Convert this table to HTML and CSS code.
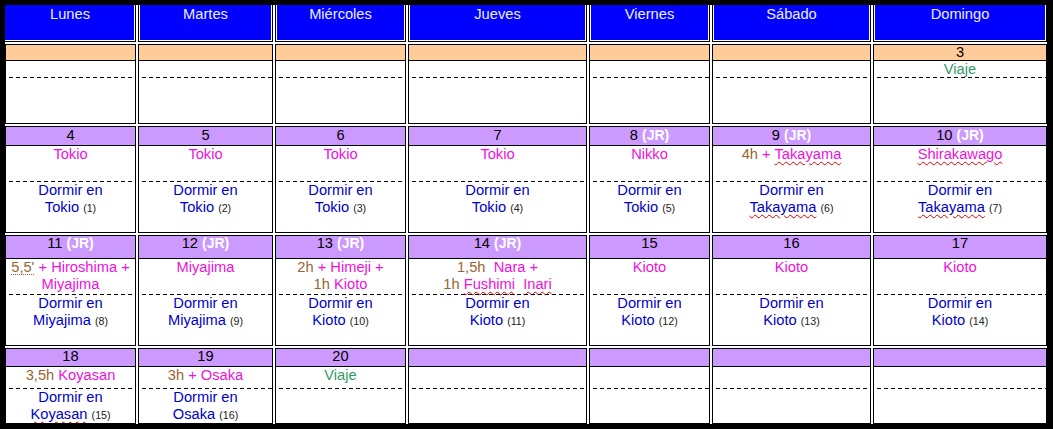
FILE: index.html
```html
<!DOCTYPE html>
<html lang="es">
<head>
<meta charset="utf-8">
<title>Calendario Japón</title>
<link rel="stylesheet" href="styles.css">
</head>
<body>
<div class="cal">
  <div class="hd first">Lunes</div>
  <div class="hd">Martes</div>
  <div class="hd">Miércoles</div>
  <div class="hd">Jueves</div>
  <div class="hd">Viernes</div>
  <div class="hd">Sábado</div>
  <div class="hd">Domingo</div>

  <div class="day w1"><div class="num"></div><div class="top"></div><div class="dash"></div><div class="bot"></div></div>
  <div class="day w1"><div class="num"></div><div class="top"></div><div class="dash"></div><div class="bot"></div></div>
  <div class="day w1"><div class="num"></div><div class="top"></div><div class="dash"></div><div class="bot"></div></div>
  <div class="day w1"><div class="num"></div><div class="top"></div><div class="dash"></div><div class="bot"></div></div>
  <div class="day w1"><div class="num"></div><div class="top"></div><div class="dash"></div><div class="bot"></div></div>
  <div class="day w1"><div class="num"></div><div class="top"></div><div class="dash"></div><div class="bot"></div></div>
  <div class="day w1"><div class="num">3</div><div class="top"><span class="g">Viaje</span></div><div class="dash"></div><div class="bot"></div></div>

  <div class="day w2"><div class="num">4</div><div class="top"><span class="m">Tokio</span></div><div class="dash"></div><div class="bot">Dormir en<br>Tokio <small>(1)</small></div></div>
  <div class="day w2"><div class="num">5</div><div class="top"><span class="m">Tokio</span></div><div class="dash"></div><div class="bot">Dormir en<br>Tokio <small>(2)</small></div></div>
  <div class="day w2"><div class="num">6</div><div class="top"><span class="m">Tokio</span></div><div class="dash"></div><div class="bot">Dormir en<br>Tokio <small>(3)</small></div></div>
  <div class="day w2"><div class="num">7</div><div class="top"><span class="m">Tokio</span></div><div class="dash"></div><div class="bot">Dormir en<br>Tokio <small>(4)</small></div></div>
  <div class="day w2"><div class="num">8 <b>(JR)</b></div><div class="top"><span class="m">Nikko</span></div><div class="dash"></div><div class="bot">Dormir en<br>Tokio <small>(5)</small></div></div>
  <div class="day w2"><div class="num">9 <b>(JR)</b></div><div class="top"><span class="br">4h</span> <span class="m">+ <span class="sp">Takayama</span></span></div><div class="dash"></div><div class="bot">Dormir en<br><span class="sp">Takayama</span> <small>(6)</small></div></div>
  <div class="day w2"><div class="num">10 <b>(JR)</b></div><div class="top"><span class="m sp">Shirakawago</span></div><div class="dash"></div><div class="bot">Dormir en<br><span class="sp">Takayama</span> <small>(7)</small></div></div>

  <div class="day w3"><div class="num">11 <b>(JR)</b></div><div class="top"><span class="br gr">5,5'</span> <span class="m">+ Hiroshima +<br>Miyajima</span></div><div class="dash"></div><div class="bot">Dormir en<br>Miyajima <small>(8)</small></div></div>
  <div class="day w3"><div class="num">12 <b>(JR)</b></div><div class="top"><span class="m">Miyajima</span></div><div class="dash"></div><div class="bot">Dormir en<br>Miyajima <small>(9)</small></div></div>
  <div class="day w3"><div class="num">13 <b>(JR)</b></div><div class="top"><span class="br">2h</span> <span class="m">+ Himeji +</span><br><span class="br">1h</span> <span class="m">Kioto</span></div><div class="dash"></div><div class="bot">Dormir en<br>Kioto <small>(10)</small></div></div>
  <div class="day w3"><div class="num">14 <b>(JR)</b></div><div class="top"><span class="br">1,5h</span>&nbsp; <span class="m">Nara +</span><br><span class="br">1h</span> <span class="m"><span class="sp">Fushimi</span>&nbsp; <span class="sp">Inari</span></span></div><div class="dash"></div><div class="bot">Dormir en<br>Kioto <small>(11)</small></div></div>
  <div class="day w3"><div class="num">15</div><div class="top"><span class="m">Kioto</span></div><div class="dash"></div><div class="bot">Dormir en<br>Kioto <small>(12)</small></div></div>
  <div class="day w3"><div class="num">16</div><div class="top"><span class="m">Kioto</span></div><div class="dash"></div><div class="bot">Dormir en<br>Kioto <small>(13)</small></div></div>
  <div class="day w3"><div class="num">17</div><div class="top"><span class="m">Kioto</span></div><div class="dash"></div><div class="bot">Dormir en<br>Kioto <small>(14)</small></div></div>

  <div class="day w4"><div class="num">18</div><div class="top"><span class="br">3,5h</span> <span class="m">Koyasan</span></div><div class="dash"></div><div class="bot">Dormir en<br><span class="sp">Koyasan</span> <small>(15)</small></div></div>
  <div class="day w4"><div class="num">19</div><div class="top"><span class="br">3h</span> <span class="m">+ Osaka</span></div><div class="dash"></div><div class="bot">Dormir en<br>Osaka <small>(16)</small></div></div>
  <div class="day w4"><div class="num">20</div><div class="top"><span class="g">Viaje</span></div><div class="dash"></div><div class="bot"></div></div>
  <div class="day w4"><div class="num"></div><div class="top"></div><div class="dash"></div><div class="bot"></div></div>
  <div class="day w4"><div class="num"></div><div class="top"></div><div class="dash"></div><div class="bot"></div></div>
  <div class="day w4"><div class="num"></div><div class="top"></div><div class="dash"></div><div class="bot"></div></div>
  <div class="day w4"><div class="num"></div><div class="top"></div><div class="dash"></div><div class="bot"></div></div>
</div>
</body>
</html>
```

FILE: styles.css
```css
html, body {
  margin: 0;
  padding: 0;
  background: #fff;
}

body {
  font-family: "Liberation Sans", Arial, sans-serif;
  font-size: 14.67px;
  line-height: 17px;
  color: #000;
}

.cal {
  display: grid;
  grid-template-columns: 131px 135px 131px 179px 121px 159px 174px;
  grid-template-rows: 37px 80px 107px 111px 76px;
  gap: 2px;
  width: 1042px;
  border-style: solid;
  border-color: #000;
  border-width: 5px 6px 5px 5px;
  background: #fff;
}

.hd {
  background: #0000ff;
  color: #eef0ff;
  border: 1px solid #000;
  border-top: 0;
  text-align: center;
  padding-top: 1px;
  box-shadow: inset 1px 0 0 #fff, inset -1px -1px 0 #fff;
}

.hd.first {
  border-left: 0;
  box-shadow: inset -1px -1px 0 #fff;
}

.day {
  display: flex;
  flex-direction: column;
  border: 1px solid #000;
  text-align: center;
  white-space: nowrap;
  overflow: hidden;
}

.num {
  flex: none;
  background: #cc99ff;
  border-bottom: 1px solid #000;
  color: #000;
}

.num b {
  color: #fff;
  font-weight: bold;
  font-size: 14px;
}

.top {
  flex: none;
}

.dash {
  flex: none;
  height: 1px;
  background: repeating-linear-gradient(to right, transparent 0 3px, #000 3px 7px);
}

.bot {
  flex: 1;
  color: #0000cc;
}

.bot small {
  font-size: 10.67px;
  color: #222;
}

.w1 .num { height: 15px; line-height: 15px; background: #ffcc99; }
.w1 .top { height: 16px; }
.w2 .num { height: 18px; }
.w2 .top { height: 35px; }
.w3 .num { height: 22px; line-height: 15px; }
.w3 .top { height: 35px; }
.w4 .num { height: 17px; line-height: 15px; }
.w4 .top { height: 21px; }

.m { color: #ee11dd; }
.br { color: #996633; }
.g { color: #339966; }

.sp {
  text-decoration: underline wavy #e00000;
  text-decoration-thickness: 1px;
  text-underline-offset: 2px;
}

.gr {
  text-decoration: underline dotted #c05030;
  text-decoration-thickness: 1px;
  text-underline-offset: 2px;
}
```
